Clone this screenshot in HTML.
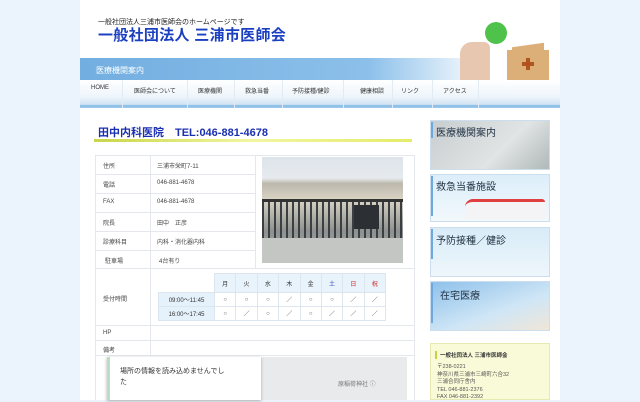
<!DOCTYPE html>
<html><head><meta charset="utf-8"><style>
*{margin:0;padding:0;box-sizing:border-box}
body{width:640px;height:400px;overflow:hidden;background:#ebf4fc;font-family:"Liberation Sans","Noto Sans CJK JP",sans-serif;position:relative}
.abs{position:absolute}
#wrap{left:80px;top:0;width:480px;height:400px;background:#fff}
.t{font-size:6px;color:#444}
table.s{border-collapse:collapse;font-size:6px;color:#555}
table.s td{border:1px solid #dde6ee;text-align:center;height:14px}
</style></head><body>
<div id="wrap" class="abs">
 <div class="abs" style="left:18px;top:17px;font-size:7px;color:#222">一般社団法人三浦市医師会のホームページです</div>
 <div class="abs" style="left:18px;top:24px;font-size:15px;font-weight:bold;color:#1a3fc0;letter-spacing:0.3px">一般社団法人 三浦市医師会</div>
 <div class="abs" style="left:0;top:58px;width:480px;height:22px;background:linear-gradient(90deg,#72aee0 0%,#8cc0ea 60%,#fff 85%)"></div>
 <div class="abs" style="left:16px;top:65px;font-size:8px;color:#fff">医療機関案内</div>
 <div class="abs" style="left:405px;top:22px;width:22px;height:22px;border-radius:50%;background:#4ec24a"></div>
 <div class="abs" style="left:380px;top:42px;width:30px;height:38px;border-radius:12px 6px 0 0;background:#e8c7b0"></div>
 <div class="abs" style="left:427px;top:50px;width:42px;height:30px;background:#dcaf78"></div>
 <div class="abs" style="left:432px;top:45px;width:32px;height:10px;background:#dcaf78;transform:skewY(-8deg)"></div>
 <div class="abs" style="left:442px;top:62px;width:12px;height:4px;background:#b0561c"></div>
 <div class="abs" style="left:446px;top:58px;width:4px;height:12px;background:#b0561c"></div>
 <div class="abs" style="left:0;top:80px;width:480px;height:28px;background:linear-gradient(#fff 0%,#eef5fb 60%,#cfe2f3 88%,#8cbfe8 90%,#9cc8ec 100%)"></div>
 <div class="abs" style="top:80px;left:0;width:480px;height:28px;font-size:6px;color:#333">
  <span class="abs" style="left:11px;top:5px">HOME</span>
  <span class="abs" style="left:54px;top:6px">医師会について</span>
  <span class="abs" style="left:118px;top:6px">医療機関</span>
  <span class="abs" style="left:165px;top:6px">救急当番</span>
  <span class="abs" style="left:212px;top:6px">予防接種/健診</span>
  <span class="abs" style="left:280px;top:6px">健康相談</span>
  <span class="abs" style="left:321px;top:6px">リンク</span>
  <span class="abs" style="left:363px;top:6px">アクセス</span>
  <span class="abs" style="left:42px;top:0;width:1px;height:28px;background:#e2ebf3"></span>
  <span class="abs" style="left:107px;top:0;width:1px;height:28px;background:#e2ebf3"></span>
  <span class="abs" style="left:154px;top:0;width:1px;height:28px;background:#e2ebf3"></span>
  <span class="abs" style="left:202px;top:0;width:1px;height:28px;background:#e2ebf3"></span>
  <span class="abs" style="left:263px;top:0;width:1px;height:28px;background:#e2ebf3"></span>
  <span class="abs" style="left:312px;top:0;width:1px;height:28px;background:#e2ebf3"></span>
  <span class="abs" style="left:352px;top:0;width:1px;height:28px;background:#e2ebf3"></span>
  <span class="abs" style="left:398px;top:0;width:1px;height:28px;background:#e2ebf3"></span>
 </div>
 <div class="abs" style="left:18px;top:124px;font-size:11px;font-weight:bold;color:#1a2fb0">田中内科医院　TEL:046-881-4678</div>
 <div class="abs" style="left:14px;top:139px;width:318px;height:3px;background:linear-gradient(90deg,#c9d64a,#f3f6a0 50%,#e3ec6a)"></div>
 <div class="abs" style="left:15px;top:155px;width:320px;height:245px;border:1px solid #e4e8ec;border-bottom:none"></div>
 <div class="abs" style="left:70px;top:155px;width:1px;height:200px;background:#e4e8ec"></div>
 <div class="abs" style="left:175px;top:155px;width:1px;height:113px;background:#e4e8ec"></div>
 <div class="abs" style="left:15px;top:174px;width:160px;height:1px;background:#e4e8ec"></div>
 <div class="abs" style="left:15px;top:193px;width:160px;height:1px;background:#e4e8ec"></div>
 <div class="abs" style="left:15px;top:212px;width:160px;height:1px;background:#e4e8ec"></div>
 <div class="abs" style="left:15px;top:231px;width:160px;height:1px;background:#e4e8ec"></div>
 <div class="abs" style="left:15px;top:250px;width:160px;height:1px;background:#e4e8ec"></div>
 <div class="abs" style="left:15px;top:268px;width:320px;height:1px;background:#e4e8ec"></div>
 <div class="abs" style="left:15px;top:325px;width:320px;height:1px;background:#e4e8ec"></div>
 <div class="abs" style="left:15px;top:340px;width:320px;height:1px;background:#e4e8ec"></div>
 <div class="abs" style="left:15px;top:355px;width:320px;height:1px;background:#e4e8ec"></div>
 <div class="abs t" style="left:23px;top:161px">住所</div><div class="abs t" style="left:77px;top:161px">三浦市栄町7-11</div>
 <div class="abs t" style="left:23px;top:180px">電話</div><div class="abs t" style="left:77px;top:180px">046-881-4678</div>
 <div class="abs t" style="left:23px;top:199px">FAX</div><div class="abs t" style="left:77px;top:199px">046-881-4678</div>
 <div class="abs t" style="left:23px;top:218px">院長</div><div class="abs t" style="left:77px;top:218px">田中　正彦</div>
 <div class="abs t" style="left:23px;top:237px">診療科目</div><div class="abs t" style="left:77px;top:237px">内科・消化器内科</div>
 <div class="abs t" style="left:25px;top:256px">駐車場</div><div class="abs t" style="left:79px;top:256px">4台有り</div>
 <div class="abs t" style="left:23px;top:294px">受付時間</div>
 <div class="abs t" style="left:23px;top:330px">HP</div>
 <div class="abs t" style="left:23px;top:345px">備考</div>
 <div class="abs" style="left:182px;top:157px;width:141px;height:106px;background:linear-gradient(#dde4ea 0%,#e6eaee 20%,#bcb8ac 25%,#d9d3c4 40%,#8d9190 70%,#a9abaa 100%);overflow:hidden">
  <div class="abs" style="left:0;top:43px;width:141px;height:38px;background:repeating-linear-gradient(90deg,#3b3f42 0 2px,transparent 2px 6px)"></div>
  <div class="abs" style="left:0;top:42px;width:141px;height:3px;background:#333"></div>
  <div class="abs" style="left:92px;top:48px;width:25px;height:24px;background:#2c3034"></div>
  <div class="abs" style="left:0;top:81px;width:141px;height:25px;background:#c4c6c4"></div>
 </div>
 <table class="s abs" style="left:78px;top:273px;width:228px">
  <tr style="height:19px;background:#e8f3fb"><td style="width:56px;border-left-color:#fff;border-top-color:#fff;background:#fff"></td><td style="color:#333">月</td><td style="color:#333">火</td><td style="color:#333">水</td><td style="color:#333">木</td><td style="color:#333">金</td><td style="color:#2440c0">土</td><td style="color:#d02020">日</td><td style="color:#d02020">祝</td></tr>
  <tr><td style="background:#e5f1fb;color:#333">09:00～11:45</td><td>○</td><td>○</td><td>○</td><td>／</td><td>○</td><td>○</td><td>／</td><td>／</td></tr>
  <tr><td style="background:#e5f1fb;color:#333">16:00～17:45</td><td>○</td><td>／</td><td>○</td><td>／</td><td>○</td><td>／</td><td>／</td><td>／</td></tr>
 </table>
 <div class="abs" style="left:27px;top:357px;width:300px;height:43px;background:#e8eaec"></div>
 <div class="abs" style="left:27px;top:357px;width:154px;height:43px;background:#fff;border-left:3px solid #b9e0c4;box-shadow:0 1px 3px #aaa"></div>
 <div class="abs" style="left:40px;top:366px;font-size:7px;color:#333;line-height:11px;width:110px">場所の情報を読み込めませんでした</div>
 <div class="abs" style="left:258px;top:379px;font-size:6px;color:#777">原稲荷神社 ⓘ</div>
 <div class="abs" style="left:350px;top:120px;width:120px;height:50px;background:linear-gradient(135deg,#c8cdd0,#e0e4e4 60%,#b0b8b8);border:1px solid #cde"></div>
 <div class="abs" style="left:351px;top:122px;width:2px;height:16px;background:#6fa8dc"></div>
 <div class="abs" style="left:356px;top:124px;font-size:10px;color:#234">医療機関案内</div>
 <div class="abs" style="left:350px;top:174px;width:120px;height:48px;background:linear-gradient(#dceefa,#f2f8fc);border:1px solid #cde"></div>
 <div class="abs" style="left:351px;top:176px;width:2px;height:40px;background:#6fa8dc"></div>
 <div class="abs" style="left:356px;top:178px;font-size:10px;color:#234">救急当番施設</div>
 <div class="abs" style="left:385px;top:199px;width:80px;height:20px;background:#f4f4f6;border-radius:8px 3px 0 0;border-top:3px solid #e04040"></div>
 <div class="abs" style="left:350px;top:227px;width:120px;height:50px;background:linear-gradient(#d8ecf8,#eef6fb);border:1px solid #cde"></div>
 <div class="abs" style="left:351px;top:229px;width:2px;height:30px;background:#6fa8dc"></div>
 <div class="abs" style="left:356px;top:232px;font-size:10px;color:#234">予防接種／健診</div>
 <div class="abs" style="left:350px;top:281px;width:120px;height:50px;background:linear-gradient(160deg,#8ec0ea,#cfe6f6 60%,#f0e6d8);border:1px solid #cde"></div>
 <div class="abs" style="left:351px;top:283px;width:2px;height:40px;background:#6fa8dc"></div>
 <div class="abs" style="left:360px;top:287px;font-size:10px;color:#234">在宅医療</div>
 <div class="abs" style="left:350px;top:343px;width:120px;height:57px;background:#f9fbd8;border:1px solid #e6eab0"></div>
 <div class="abs" style="left:355px;top:351px;width:2px;height:8px;background:#c8d040"></div>
 <div class="abs" style="left:360px;top:351px;font-size:5.5px;color:#333;font-weight:bold">一般社団法人 三浦市医師会</div>
 <div class="abs" style="left:357px;top:364px;font-size:5.5px;color:#555;line-height:7.5px">〒238-0221<br>神奈川県三浦市三崎町六合32<br>三浦合同庁舎内<br>TEL 046-881-2376<br>FAX 046-881-2392</div>
</div>
</body></html>
